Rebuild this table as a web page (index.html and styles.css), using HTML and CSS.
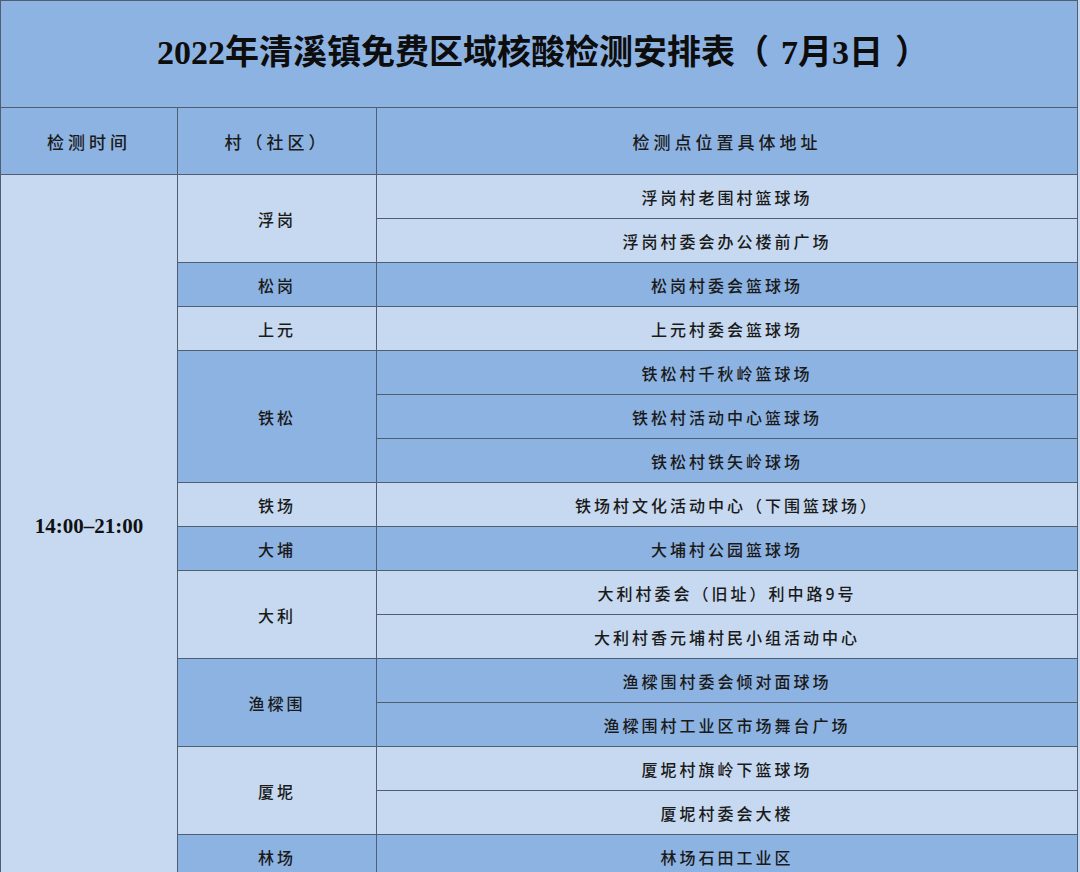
FILE: index.html
```html
<!DOCTYPE html>
<html lang="zh-CN">
<head>
<meta charset="utf-8">
<title>2022年清溪镇免费区域核酸检测安排表（7月3日）</title>
<link rel="stylesheet" href="styles.css">
</head>
<body>
<table class="sheet">
  <colgroup>
    <col class="c-time">
    <col class="c-village">
    <col class="c-addr">
  </colgroup>
  <tr class="title-row">
    <td colspan="3" class="title">2022年清溪镇免费区域核酸检测安排表（<span class="num">7月3日</span>）</td>
  </tr>
  <tr class="head-row">
    <td class="head">检测时间</td>
    <td class="head">村（社区）</td>
    <td class="head">检测点位置具体地址</td>
  </tr>
  <tr class="light">
    <td rowspan="16" class="time">14:00–21:00</td>
    <td rowspan="2" class="village">浮岗</td>
    <td class="addr">浮岗村老围村篮球场</td>
  </tr>
  <tr class="light sub"><td class="addr">浮岗村委会办公楼前广场</td></tr>
  <tr class="dark"><td class="village">松岗</td><td class="addr">松岗村委会篮球场</td></tr>
  <tr class="light"><td class="village">上元</td><td class="addr">上元村委会篮球场</td></tr>
  <tr class="dark"><td rowspan="3" class="village">铁松</td><td class="addr">铁松村千秋岭篮球场</td></tr>
  <tr class="dark sub"><td class="addr">铁松村活动中心篮球场</td></tr>
  <tr class="dark sub"><td class="addr">铁松村铁矢岭球场</td></tr>
  <tr class="light"><td class="village">铁场</td><td class="addr">铁场村文化活动中心（下围篮球场）</td></tr>
  <tr class="dark"><td class="village">大埔</td><td class="addr">大埔村公园篮球场</td></tr>
  <tr class="light"><td rowspan="2" class="village">大利</td><td class="addr">大利村委会（旧址）利中路9号</td></tr>
  <tr class="light sub"><td class="addr">大利村香元埔村民小组活动中心</td></tr>
  <tr class="dark"><td rowspan="2" class="village">渔樑围</td><td class="addr">渔樑围村委会倾对面球场</td></tr>
  <tr class="dark sub"><td class="addr">渔樑围村工业区市场舞台广场</td></tr>
  <tr class="light"><td rowspan="2" class="village">厦坭</td><td class="addr">厦坭村旗岭下篮球场</td></tr>
  <tr class="light sub"><td class="addr">厦坭村委会大楼</td></tr>
  <tr class="dark"><td class="village">林场</td><td class="addr">林场石田工业区</td></tr>
</table>
</body>
</html>
```

FILE: styles.css
```css
html, body {
  margin: 0;
  padding: 0;
  background: #c6d9f0;
}

.sheet {
  border-collapse: collapse;
  width: 1078px;
  table-layout: fixed;
  font-family: "Noto Sans CJK SC", "Liberation Serif", serif;
  color: #1a1a1a;
}

.c-time { width: 177px; }
.c-village { width: 199px; }

.sheet td {
  border: 1px solid #4f5f70;
  text-align: center;
  vertical-align: middle;
  padding: 0;
}

.title-row { height: 107px; }
.title {
  background: #8db3e2;
  font-family: "Liberation Serif", "Noto Sans CJK SC", serif;
  font-weight: 700;
  font-size: 34px;
  color: #0d0d0d;
  padding-left: 8px !important;
  padding-bottom: 10px !important;
}

.title .num {
  padding: 0 12px;
}

.head-row { height: 67px; }
.head {
  background: #8db3e2;
  font-size: 17px;
  font-weight: 500;
  letter-spacing: 4px;
}

.sheet tr.light, .sheet tr.dark { height: 44px; }
.light td { background: #c6d9f0; }
.dark td { background: #8db3e2; }

.sub td { border-top-color: #6d7d8e; }

.time {
  background: #c6d9f0 !important;
  font-family: "Liberation Serif", serif;
  font-weight: 700;
  font-size: 21px;
  color: #111;
}

.village, .addr {
  font-size: 16px;
  letter-spacing: 3px;
  font-weight: 500;
}
```
